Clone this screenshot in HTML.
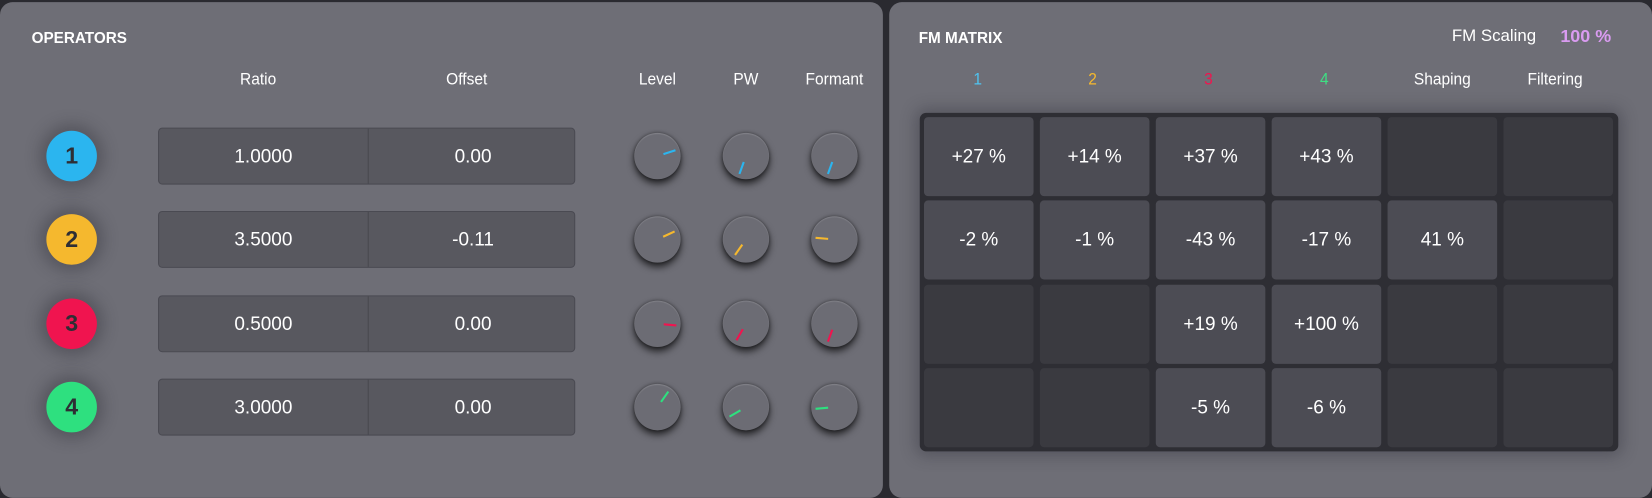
<!DOCTYPE html>
<html><head><style>
body{margin:0;width:1652px;height:482px;background:#2a2a30;overflow:hidden;font-family:"Liberation Sans",sans-serif}
#w{position:absolute;left:0;top:0;width:1568px;height:457px;transform:scale(1.05357,1.0547);transform-origin:0 0}
.p{position:absolute;background:#6e6e76;border-radius:12px}
.t{position:absolute;color:#fff;font-size:16px;white-space:nowrap}
.c{transform:translateX(-50%) scaleX(.92)}
.h{font-weight:bold;font-size:14.5px}
.op{position:absolute;width:48px;height:48px;border-radius:50%;margin:-24px 0 0 -24px;box-shadow:0 0 14px 6px rgba(40,40,50,.35);text-align:center;line-height:48px;font-size:22px;color:#2e2e34;font-weight:bold}
.box{position:absolute;left:150px;width:396px;height:54px;background:#58585f;border:1px solid #4a4a52;border-radius:4px;box-sizing:border-box}
.box div{position:absolute;top:0;width:198px;height:52px;line-height:52px;text-align:center;color:#fff;font-size:18px}
.box div+div{border-left:1px solid #48484f}
.k{position:absolute;width:44px;height:44px;border-radius:50%;margin:-22px 0 0 -22px;background:#6c6c74;box-shadow:0 4px 7px rgba(0,0,0,.7),0 0 3px rgba(0,0,0,.4),inset 0 1px 1px rgba(255,255,255,.15)}
.k i{position:absolute;left:21px;top:4px;width:2px;height:12px;transform-origin:1px 18px}
.grid{position:absolute;left:873px;top:107px;width:663px;height:321px;background:#2e2e34;border-radius:6px;box-shadow:0 0 14px 4px rgba(50,50,60,.4)}
.cell{position:absolute;width:104px;height:75px;border-radius:4px;background:#3a3a40;color:#fff;font-size:18px;text-align:center;line-height:75px}
.f{background:#4c4c54}
</style></head><body><div id="w">
<div class="p" style="left:0;top:2px;width:838px;height:470px"></div>
<div class="p" style="left:844px;top:2px;width:724px;height:470px"></div>
<div class="t h" style="left:30px;top:29px">OPERATORS</div>
<div class="t c" style="left:245px;top:67px">Ratio</div>
<div class="t c" style="left:443px;top:67px">Offset</div>
<div class="t c" style="left:624px;top:67px">Level</div>
<div class="t c" style="left:708px;top:67px">PW</div>
<div class="t c" style="left:792px;top:67px">Formant</div>

<div class="op" style="left:68px;top:148px;background:#2bb5ef">1</div>
<div class="op" style="left:68px;top:227px;background:#f5b82e">2</div>
<div class="op" style="left:68px;top:307px;background:#f0144f">3</div>
<div class="op" style="left:68px;top:386px;background:#2ee07f">4</div>

<div class="box" style="top:121px"><div style="left:0">1.0000</div><div style="left:198px">0.00</div></div>
<div class="box" style="top:200px"><div style="left:0">3.5000</div><div style="left:198px">-0.11</div></div>
<div class="box" style="top:280px"><div style="left:0">0.5000</div><div style="left:198px">0.00</div></div>
<div class="box" style="top:359px"><div style="left:0">3.0000</div><div style="left:198px">0.00</div></div>

<div class="k" style="left:624px;top:148px"><i style="background:#2bb5ef;transform:rotate(72deg)"></i></div>
<div class="k" style="left:708px;top:148px"><i style="background:#2bb5ef;transform:rotate(200deg)"></i></div>
<div class="k" style="left:792px;top:148px"><i style="background:#2bb5ef;transform:rotate(200deg)"></i></div>
<div class="k" style="left:624px;top:227px"><i style="background:#f5b82e;transform:rotate(65deg)"></i></div>
<div class="k" style="left:708px;top:227px"><i style="background:#f5b82e;transform:rotate(215deg)"></i></div>
<div class="k" style="left:792px;top:227px"><i style="background:#f5b82e;transform:rotate(-85deg)"></i></div>
<div class="k" style="left:624px;top:307px"><i style="background:#f0144f;transform:rotate(95deg)"></i></div>
<div class="k" style="left:708px;top:307px"><i style="background:#f0144f;transform:rotate(210deg)"></i></div>
<div class="k" style="left:792px;top:307px"><i style="background:#f0144f;transform:rotate(200deg)"></i></div>
<div class="k" style="left:624px;top:386px"><i style="background:#2ee07f;transform:rotate(35deg)"></i></div>
<div class="k" style="left:708px;top:386px"><i style="background:#2ee07f;transform:rotate(240deg)"></i></div>
<div class="k" style="left:792px;top:386px"><i style="background:#2ee07f;transform:rotate(265deg)"></i></div>

<div class="t h" style="left:872px;top:29px">FM MATRIX</div>
<div class="t" style="left:1378px;top:26px">FM Scaling</div>
<div class="t" style="left:1481px;top:25px;color:#d99bf0;font-weight:bold;font-size:17px">100 %</div>
<div class="t c" style="left:928px;top:67px;color:#4fc3f0">1</div>
<div class="t c" style="left:1037px;top:67px;color:#f5b82e">2</div>
<div class="t c" style="left:1147px;top:67px;color:#f0144f">3</div>
<div class="t c" style="left:1257px;top:67px;color:#3ee083">4</div>
<div class="t c" style="left:1369px;top:67px">Shaping</div>
<div class="t c" style="left:1476px;top:67px">Filtering</div>

<div class="grid"></div>
<div class="cell f" style="left:877px;top:111px">+27 %</div>
<div class="cell f" style="left:987px;top:111px">+14 %</div>
<div class="cell f" style="left:1097px;top:111px">+37 %</div>
<div class="cell f" style="left:1207px;top:111px">+43 %</div>
<div class="cell" style="left:1317px;top:111px"></div>
<div class="cell" style="left:1427px;top:111px"></div>
<div class="cell f" style="left:877px;top:190px">-2 %</div>
<div class="cell f" style="left:987px;top:190px">-1 %</div>
<div class="cell f" style="left:1097px;top:190px">-43 %</div>
<div class="cell f" style="left:1207px;top:190px">-17 %</div>
<div class="cell f" style="left:1317px;top:190px">41 %</div>
<div class="cell" style="left:1427px;top:190px"></div>
<div class="cell" style="left:877px;top:270px"></div>
<div class="cell" style="left:987px;top:270px"></div>
<div class="cell f" style="left:1097px;top:270px">+19 %</div>
<div class="cell f" style="left:1207px;top:270px">+100 %</div>
<div class="cell" style="left:1317px;top:270px"></div>
<div class="cell" style="left:1427px;top:270px"></div>
<div class="cell" style="left:877px;top:349px"></div>
<div class="cell" style="left:987px;top:349px"></div>
<div class="cell f" style="left:1097px;top:349px">-5 %</div>
<div class="cell f" style="left:1207px;top:349px">-6 %</div>
<div class="cell" style="left:1317px;top:349px"></div>
<div class="cell" style="left:1427px;top:349px"></div>
</div></body></html>
